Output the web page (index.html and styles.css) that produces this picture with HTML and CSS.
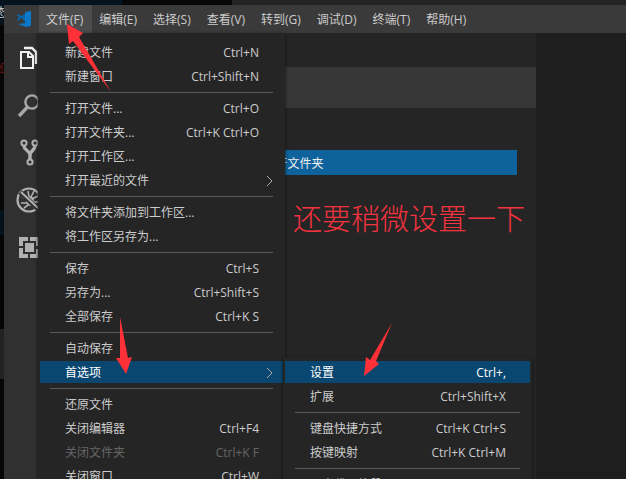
FILE: index.html
```html
<!DOCTYPE html>
<html lang="zh-CN">
<head>
<meta charset="utf-8">
<title>Visual Studio Code</title>
<link rel="stylesheet" href="styles.css">
</head>
<body>
<div class="desktop">
  <div class="behind-top"></div>
  <div class="behind-left"><span class="peek peek-title">态</span><span class="peek peek-red">如</span></div>
  <div class="window">
    <header class="menubar">
      <svg class="logo" viewBox="0 0 16 16" aria-hidden="true">
        <path d="M9 1l6-1v15l-5 1-8-3 7-1z" fill="#0b78c8"/>
        <path d="M9 3v7L5 7l-3 3-1-1 2-3-2-2 1-1 3 2z" fill="#0967ad"/>
      </svg>
      <nav class="menus">
        <button class="menu-title open">文件(F)</button>
        <button class="menu-title">编辑(E)</button>
        <button class="menu-title">选择(S)</button>
        <button class="menu-title">查看(V)</button>
        <button class="menu-title">转到(G)</button>
        <button class="menu-title">调试(D)</button>
        <button class="menu-title">终端(T)</button>
        <button class="menu-title">帮助(H)</button>
      </nav>
    </header>
    <div class="workbench">
      <aside class="activity">
        <button class="activity-item" aria-label="资源管理器">
          <svg viewBox="0 0 24 24" fill="none" stroke="#f0f0f0" stroke-width="2"><path d="M3 5h8l4 4v12H3z"/><path d="M10 5v5h5"/><path d="M6 1h8l4 4v12" stroke-width="2.4"/></svg>
        </button>
        <button class="activity-item" aria-label="搜索">
          <svg viewBox="0 0 24 24" fill="none" stroke="#a8a8a8" stroke-width="2.4"><circle cx="14" cy="8" r="6.6"/><path d="M9.5 13L1 22" stroke-width="3.4"/></svg>
        </button>
        <button class="activity-item" aria-label="源代码管理">
          <svg viewBox="0 0 24 24" fill="none" stroke="#b0b0b0" stroke-width="2"><circle cx="6" cy="2" r="2.6"/><circle cx="17" cy="2" r="2.6"/><circle cx="12" cy="21" r="2.6"/><path d="M6 5c0 4 6 5 6 9v4M17 5c0 4-5 5-5 9" stroke-width="3.4"/></svg>
        </button>
        <button class="activity-item" aria-label="调试">
          <svg viewBox="0 0 24 24" fill="none" stroke="#b0b0b0" stroke-width="2"><circle cx="11" cy="12" r="11.5" stroke-width="2.2"/><ellipse cx="12" cy="13" rx="4" ry="5" fill="#b0b0b0" stroke="none"/><path d="M4 9l5 2M3 15h6M6 20l4-3M10 3l1 6M16 3l-3 6M20 8l-6 3M21 14h-6M16 20l-2-4" stroke-width="1.6"/><path d="M2 4l18 17" stroke="#303030" stroke-width="5"/><path d="M3 4l17 16"/></svg>
        </button>
        <button class="activity-item" aria-label="扩展">
          <svg viewBox="0 0 24 24" fill="#b0b0b0"><path d="M1 2h9v4H5v5H1zM12 2h10v9h-4V6h-6zM1 13h4v6h5v4H1zM18 14h4v9H12v-4h6z"/><path d="M7 8h9v9H7z"/></svg>
        </button>
      </aside>
      <section class="sidebar">
        <div class="section-header"></div>
        <button class="open-folder">打开文件夹</button>
        <p class="note">还要稍微设置一下</p>
      </section>
      <main class="editor"></main>

      <ul class="menu file-menu">
        <li><button class="item"><span>新建文件</span><kbd>Ctrl+N</kbd></button></li>
        <li><button class="item"><span>新建窗口</span><kbd>Ctrl+Shift+N</kbd></button></li>
        <li class="line"></li>
        <li><button class="item"><span>打开文件...</span><kbd>Ctrl+O</kbd></button></li>
        <li><button class="item"><span>打开文件夹...</span><kbd>Ctrl+K Ctrl+O</kbd></button></li>
        <li><button class="item"><span>打开工作区...</span></button></li>
        <li><button class="item parent"><span>打开最近的文件</span><svg class="chevron" viewBox="0 0 8 12"><path d="M1 1l5 5-5 5"/></svg></button></li>
        <li class="line"></li>
        <li><button class="item"><span>将文件夹添加到工作区...</span></button></li>
        <li><button class="item"><span>将工作区另存为...</span></button></li>
        <li class="line"></li>
        <li><button class="item"><span>保存</span><kbd>Ctrl+S</kbd></button></li>
        <li><button class="item"><span>另存为...</span><kbd>Ctrl+Shift+S</kbd></button></li>
        <li><button class="item"><span>全部保存</span><kbd>Ctrl+K S</kbd></button></li>
        <li class="line"></li>
        <li><button class="item"><span>自动保存</span></button></li>
        <li class="has-submenu">
          <button class="item parent selected"><span>首选项</span><svg class="chevron" viewBox="0 0 8 12"><path d="M1 1l5 5-5 5"/></svg></button>
          <ul class="menu submenu">
            <li><button class="item selected"><span>设置</span><kbd>Ctrl+,</kbd></button></li>
            <li><button class="item"><span>扩展</span><kbd>Ctrl+Shift+X</kbd></button></li>
            <li class="line"></li>
            <li><button class="item"><span>键盘快捷方式</span><kbd>Ctrl+K Ctrl+S</kbd></button></li>
            <li><button class="item"><span>按键映射</span><kbd>Ctrl+K Ctrl+M</kbd></button></li>
            <li class="line"></li>
            <li><button class="item"><span>用户代码片段</span></button></li>
          </ul>
        </li>
        <li class="line"></li>
        <li><button class="item"><span>还原文件</span></button></li>
        <li><button class="item"><span>关闭编辑器</span><kbd>Ctrl+F4</kbd></button></li>
        <li><button class="item" disabled><span>关闭文件夹</span><kbd>Ctrl+K F</kbd></button></li>
        <li><button class="item"><span>关闭窗口</span><kbd>Ctrl+W</kbd></button></li>
      </ul>
    </div>
  </div>
  <svg class="arrows" width="626" height="479" viewBox="0 0 626 479" aria-hidden="true">
    <path d="M67 24l16 9-4 4 32 55-38-51-4 3z"/>
    <path d="M120 317l8 41 4-1-6 17-10-16h4z"/>
    <path d="M392 323l-16 38 3 3-15 12 2-19 4 3z"/>
  </svg>
</div>
</body>
</html>
```
FILE: styles.css
```css
* { box-sizing: border-box; }

body {
  margin: 0;
  background: #0a0a0a;
  color: #cccccc;
  font: 12px/22px "Open Sans", "Noto Sans CJK SC", sans-serif;
}

button {
  border: 0;
  padding: 0;
  background: none;
  color: inherit;
  font: inherit;
}

.desktop {
  position: relative;
  display: grid;
  grid-template: 5px 1fr / 4px 1fr;
  height: 100vh;
  overflow: hidden;
}

.behind-top {
  grid-column: 1 / -1;
  background: linear-gradient(90deg, #04131d 122px, #070707 122px 232px, #242424 232px);
}

.behind-left {
  position: relative;
  overflow: hidden;
  background: linear-gradient(#04131d 20px, #060606 20px 205px, #03111a 205px 230px, #050505 230px 324px, #222222 324px 374px, #060606 374px);
}

.peek { position: absolute; right: -3px; line-height: 16px; }
.peek-title { top: 0; }
.peek-red { top: 56px; color: #6d1515; }

.window {
  display: flex;
  flex-direction: column;
  min-height: 0;
}

.menubar {
  display: flex;
  flex: none;
  height: 28px;
  background: #3a3a3a;
}

.logo { width: 16px; height: 16px; margin: 6px 7px 6px 12px; }
.menus { display: flex; }
.menu-title { padding: 2px 9px 0 7px; white-space: nowrap; }
.menu-title.open { background: #4c4c4c; }

.workbench {
  position: relative;
  display: flex;
  flex: 1;
  min-height: 0;
}

.activity {
  display: flex;
  flex: none;
  flex-direction: column;
  gap: 23px;
  width: 46px;
  padding: 14px 0 0 14px;
  background: #303030;
}

.activity-item { display: block; width: 24px; height: 24px; }
.activity-item svg { display: block; width: 24px; height: 24px; overflow: visible; }

.sidebar { flex: none; width: 486px; background: #252526; }
.section-header { height: 41px; margin-top: 34px; background: #373737; }

.open-folder {
  display: block;
  width: 447px;
  height: 25px;
  margin: 42px 20px 0;
  padding-top: 2px;
  background: #0e639c;
  color: #f0f0f0;
}

.note {
  margin: 23px 0 0 243px;
  color: #f5333f;
  font: 300 29px/38px "Noto Sans CJK SC", sans-serif;
}

.editor { flex: 1; background: #1e1e1e; }

.menu {
  position: absolute;
  display: flex;
  flex-direction: column;
  gap: 2px;
  margin: 0;
  padding: 8px 2px;
  background: #252526;
  box-shadow: 0 1px 3px #111111;
  list-style: none;
}

.file-menu { top: 0; left: 34px; width: 247px; }
.has-submenu { position: relative; }
.submenu { top: -4px; left: 243px; width: 249px; padding-top: 4px; }

.item {
  display: flex;
  justify-content: space-between;
  align-items: center;
  width: 100%;
  height: 22px;
  padding: 2px 24px 0 25px;
  white-space: nowrap;
}

.item.parent { padding-right: 9px; }
.item.selected { background: #094771; color: #ffffff; }
.item:disabled { color: #656565; }

kbd { font: inherit; }

.chevron {
  width: 8px;
  height: 12px;
  fill: none;
  stroke: #a8a8a8;
}

.line { height: 1px; margin: 3px 10px 2px; background: #5a5a5a; }

.arrows { position: absolute; top: 0; left: 0; fill: #ff3038; pointer-events: none; }
```
